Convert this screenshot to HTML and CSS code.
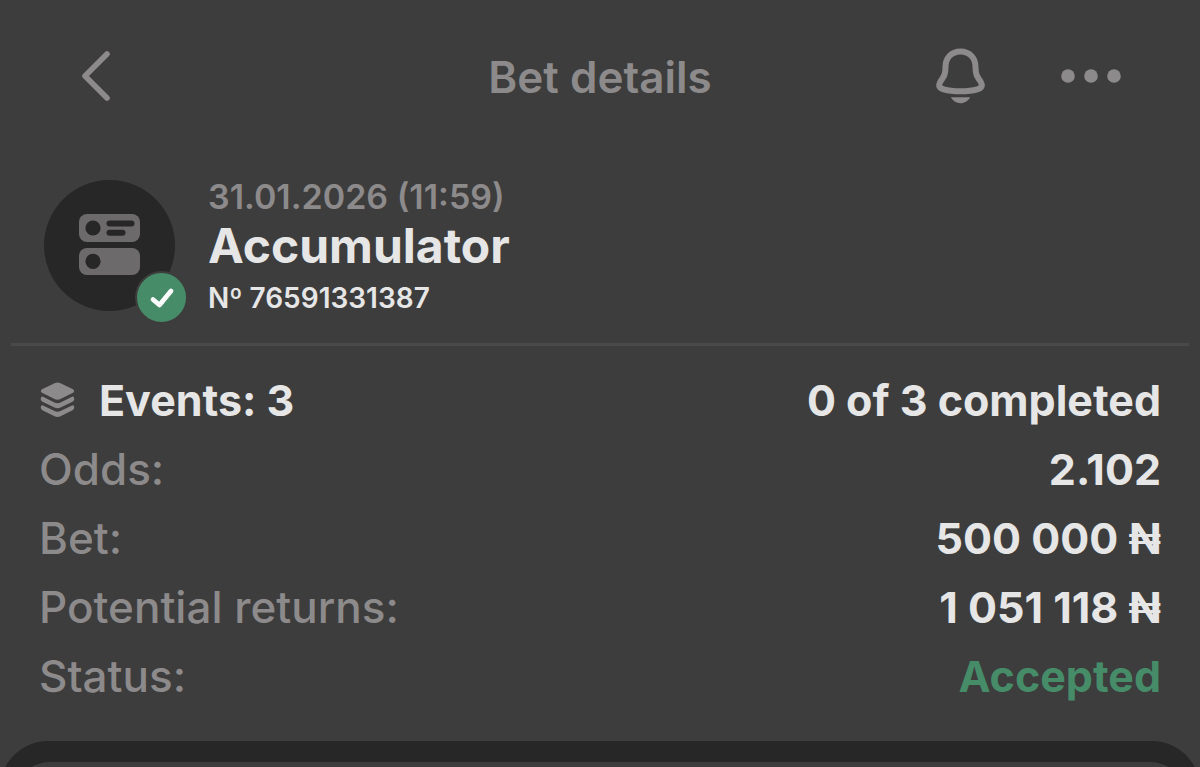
FILE: index.html
```html
<!DOCTYPE html>
<html lang="en">

<head>
    <meta charset="UTF-8">
    <meta name="viewport" content="width=device-width, initial-scale=1.0">
    <title>Bet details</title>
    <link rel="stylesheet" href="styles.css">
</head>

<body>
    <header class="topbar">
        <div class="topbar-side">
            <button class="icon-btn" type="button" aria-label="Back">
                <svg width="40" height="62" viewBox="0 0 40 62" fill="none" stroke="currentColor" stroke-width="5.600" stroke-linecap="round" stroke-linejoin="round">
                    <path d="M31 8 L9 30 L31 52" />
                </svg>
            </button>
        </div>
        <h1 class="topbar-title">Bet details</h1>
        <div class="topbar-side topbar-actions">
            <button class="icon-btn" type="button" aria-label="Notifications">
                <svg width="60" height="62" viewBox="0 0 60 62">
                    <path d="M30.500 5.500C21 5.500 15.500 12.500 15.500 21C15.500 29 13.500 31 11 34.600C7.500 39.800 9.500 42.200 13.800 43.400C18.800 44.900 25 45.300 30.500 45.300C36 45.300 42.200 44.900 47.200 43.400C51.500 42.200 53.500 39.800 50 34.600C47.500 31 45.500 29 45.500 21C45.500 12.500 40 5.500 30.500 5.500Z" fill="none" stroke="currentColor" stroke-width="6" stroke-linejoin="round" />
                    <path d="M20.800 51.300H40.200C38 55 34.500 57.300 30.500 57.300C26.500 57.300 23 55 20.800 51.300Z" fill="currentColor" />
                </svg>
            </button>
            <button class="icon-btn" type="button" aria-label="More">
                <svg width="64" height="62" viewBox="0 0 64 62" fill="currentColor">
                    <circle cx="8" cy="30" r="6.800" />
                    <circle cx="31" cy="30" r="6.800" />
                    <circle cx="54" cy="30" r="6.800" />
                </svg>
            </button>
        </div>
    </header>

    <section class="bet">
        <div class="bet-icon">
            <svg width="64" height="64" viewBox="0 0 64 64">
                <rect x="1" y="0" width="61" height="28" rx="8" fill="#6d6a6b" />
                <rect x="1" y="34" width="61" height="27" rx="8" fill="#6d6a6b" />
                <g fill="#272727">
                    <circle cx="15" cy="14" r="7.600" />
                    <circle cx="15" cy="47.300" r="7.600" />
                    <rect x="28.500" y="6.500" width="28" height="6" rx="3" />
                    <rect x="28.500" y="15.700" width="19" height="6" rx="3" />
                </g>
            </svg>
            <span class="badge">
                <svg width="26" height="22" viewBox="0 0 26 22" fill="none" stroke="#fff" stroke-width="4.800" stroke-linecap="round" stroke-linejoin="round">
                    <path d="M4 12.500 L10.500 18 L22 4" />
                </svg>
            </span>
        </div>
        <div class="bet-info">
            <p class="bet-date">31.01.2026 (11:59)</p>
            <h2 class="bet-type">Accumulator</h2>
            <p class="bet-number">Nº 76591331387</p>
        </div>
    </section>

    <dl class="details">
        <div class="row">
            <dt class="events">
                <svg width="36" height="40" viewBox="0 0 36 40" fill="currentColor">
                    <path d="M15.500 2.300Q18.500 0.800 21.500 2.300L34 8.200Q36.200 10 34 11.800L21.500 18Q18.500 19.400 15.500 18L3 11.800Q0.800 10 3 8.200Z" />
                    <path d="M3.500 15.600L15.500 21.500Q18.500 22.900 21.500 21.500L33.500 15.600Q35.300 15.600 35.300 18Q35.300 19.800 33.500 20.700L21.500 26.600Q18.500 28 15.500 26.600L3.500 20.700Q1.700 19.800 1.700 18Q1.700 15.600 3.500 15.600Z" />
                    <path d="M3.500 24.200L15.500 30.100Q18.500 31.500 21.500 30.100L33.500 24.200Q35.300 24.200 35.300 26.600Q35.300 28.400 33.500 29.300L21.500 35.200Q18.500 36.600 15.500 35.200L3.500 29.300Q1.700 28.400 1.700 26.600Q1.700 24.200 3.500 24.200Z" />
                </svg>
                <span class="value">Events: 3</span>
            </dt>
            <dd class="value">0 of 3 completed</dd>
        </div>
        <div class="row">
            <dt>Odds:</dt>
            <dd class="value">2.102</dd>
        </div>
        <div class="row">
            <dt>Bet:</dt>
            <dd class="value">500 000 ₦</dd>
        </div>
        <div class="row">
            <dt>Potential returns:</dt>
            <dd class="value">1 051 118 ₦</dd>
        </div>
        <div class="row">
            <dt>Status:</dt>
            <dd class="value accepted">Accepted</dd>
        </div>
    </dl>

    <section class="sheet">
        <div class="sheet-card"></div>
    </section>
</body>

</html>
```
FILE: styles.css
```css
* {
    box-sizing: border-box;
}

body {
    margin: 0;
    height: 100vh;
    overflow: hidden;
    display: flex;
    flex-direction: column;
    background-color: #3d3d3d;
    color: #e6e6e6;
    font-family: Inter, "Liberation Sans", sans-serif;
}

h1,
h2,
p,
dl,
dd {
    margin: 0;
}

.topbar {
    display: flex;
    align-items: center;
    padding: 46px 76px 0;
    color: #8d8a8b;
}

.topbar-side {
    flex: 1;
    display: flex;
}

.topbar-actions {
    justify-content: flex-end;
    gap: 70px;
}

.topbar-title {
    font-size: 44px;
    line-height: 62px;
    font-weight: 600;
}

.icon-btn {
    padding: 0;
    border: none;
    background: none;
    color: inherit;
    cursor: pointer;
}

.icon-btn svg {
    display: block;
}

.bet {
    display: flex;
    align-items: flex-start;
    gap: 33px;
    margin: 70px 11px 0;
    padding: 0 33px 23px;
    border-bottom: 3px solid #4a4a4a;
}

.bet-icon {
    position: relative;
    display: flex;
    align-items: center;
    justify-content: center;
    width: 131px;
    height: 131px;
    margin-top: 2px;
    border-radius: 50%;
    background-color: #272727;
}

.badge {
    position: absolute;
    right: -13px;
    bottom: -13px;
    display: flex;
    align-items: center;
    justify-content: center;
    width: 53px;
    height: 53px;
    border: 2px solid #3d3d3d;
    border-radius: 50%;
    background-color: #468c69;
}

.bet-date {
    font-size: 34px;
    line-height: 38px;
    font-weight: 600;
    color: #8d8a8b;
}

.bet-type {
    font-size: 48px;
    line-height: 60px;
    font-weight: 700;
}

.bet-number {
    font-size: 28px;
    line-height: 44px;
    font-weight: 600;
}

.details {
    padding: 20px 39px 30px;
}

.row {
    display: flex;
    justify-content: space-between;
    font-size: 44px;
    line-height: 69px;
    font-weight: 500;
    color: #8d8a8b;
}

.events {
    display: flex;
    align-items: center;
    gap: 24px;
}

.value {
    font-size: 43px;
    font-weight: 700;
    color: #e6e6e6;
}

.accepted {
    color: #468c69;
}

/* taller than what is left of the window, so the corners keep their full radius */
.sheet {
    flex: 1 0 100px;
    display: flex;
    padding: 21px 12px 0;
    border-radius: 48px 48px 0 0;
    background-color: #272727;
}

.sheet-card {
    flex: 1;
    border-radius: 38px 38px 0 0;
    background-color: #3d3d3d;
}
```
